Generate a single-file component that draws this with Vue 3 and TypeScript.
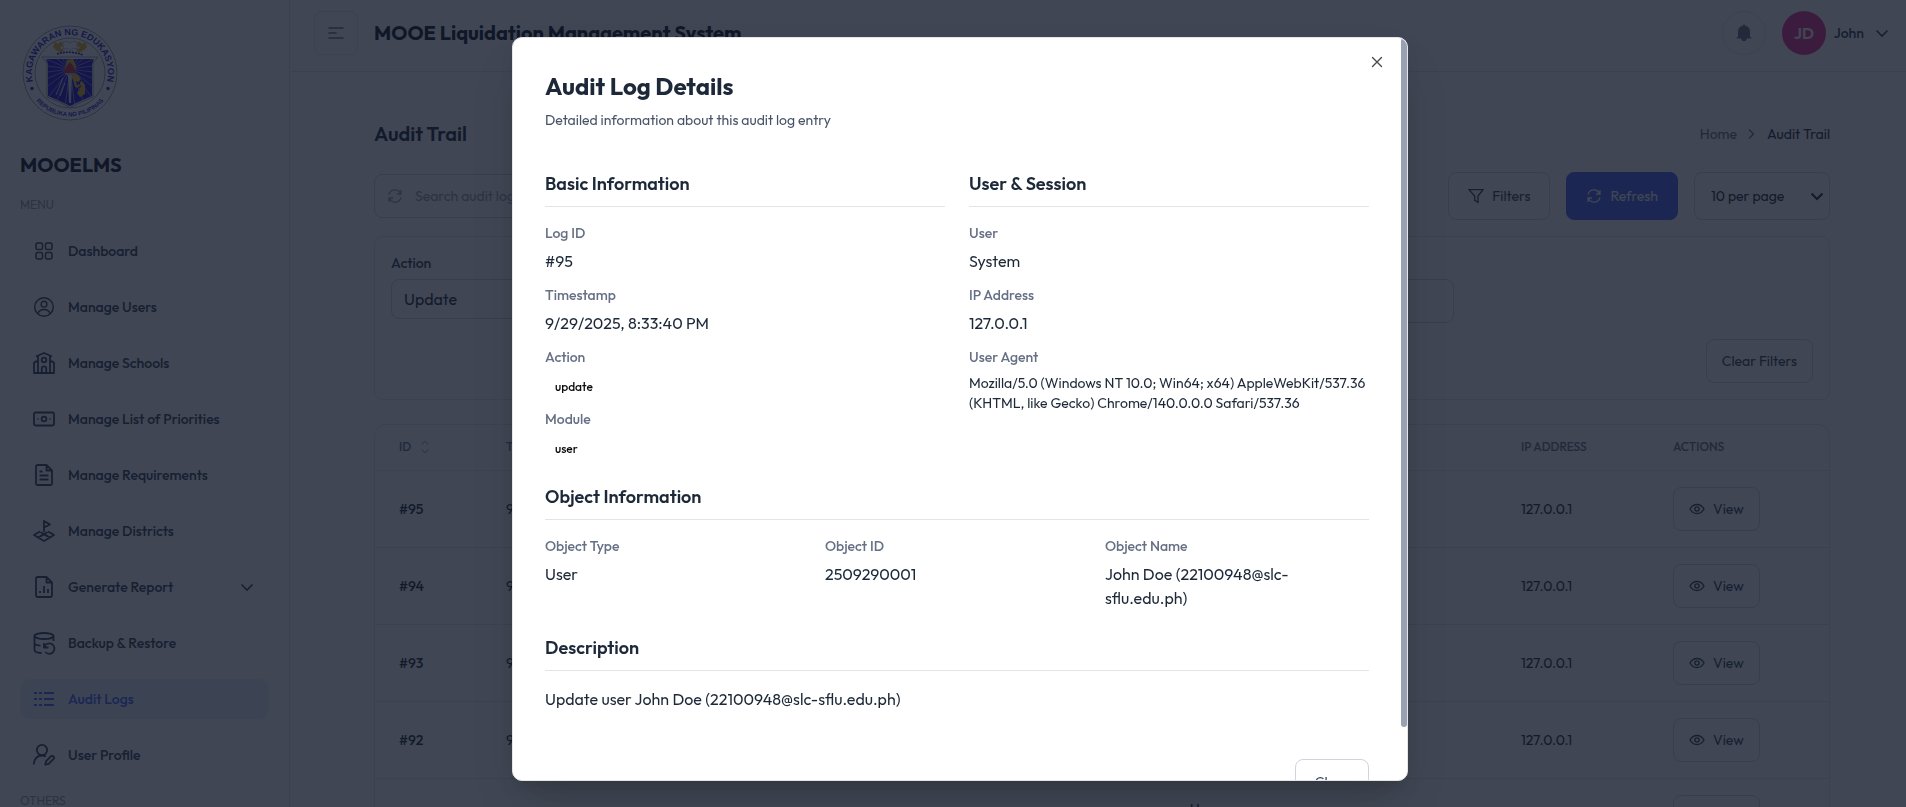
<script setup lang="ts">
import { computed, onMounted, ref } from 'vue'

interface MenuItem {
  label: string
  icon: string
  active?: boolean
  expandable?: boolean
}

interface Field {
  label: string
  value: string
  kind?: 'badge' | 'small'
}

interface LogRow {
  id: string
  time: string
  user: string
  action: string
  module: string
  object: string
  ip: string
}

const menu: MenuItem[] = [
  { label: 'Dashboard', icon: 'grid' },
  { label: 'Manage Users', icon: 'user' },
  { label: 'Manage Schools', icon: 'school' },
  { label: 'Manage List of Priorities', icon: 'cash' },
  { label: 'Manage Requirements', icon: 'file' },
  { label: 'Manage Districts', icon: 'flag' },
  { label: 'Generate Report', icon: 'report', expandable: true },
  { label: 'Backup & Restore', icon: 'backup' },
  { label: 'Audit Logs', icon: 'list', active: true },
  { label: 'User Profile', icon: 'profile' },
]

const basic: Field[] = [
  { label: 'Log ID', value: '#95' },
  { label: 'Timestamp', value: '9/29/2025, 8:33:40 PM' },
  { label: 'Action', value: 'update', kind: 'badge' },
  { label: 'Module', value: 'user', kind: 'badge' },
]

const session: Field[] = [
  { label: 'User', value: 'System' },
  { label: 'IP Address', value: '127.0.0.1' },
  {
    label: 'User Agent',
    value:
      'Mozilla/5.0 (Windows NT 10.0; Win64; x64) AppleWebKit/537.36 (KHTML, like Gecko) Chrome/140.0.0.0 Safari/537.36',
    kind: 'small',
  },
]

const objectInfo: Field[] = [
  { label: 'Object Type', value: 'User' },
  { label: 'Object ID', value: '2509290001' },
  { label: 'Object Name', value: 'John Doe (22100948@slc-sflu.edu.ph)' },
]

const rows: LogRow[] = ['#95', '#94', '#93', '#92', '#91'].map((id) => ({
  id,
  time: '9/29/2025',
  user: 'System',
  action: 'update',
  module: 'user',
  object: 'John Doe',
  ip: '127.0.0.1',
}))

const action = ref('Update')
const perPage = ref('10')
const search = ref('')
const dateRange = ref('')

// Thin scroll indicator of the dialog
const scroller = ref<HTMLElement | null>(null)
const visible = ref(1)
const offset = ref(0)
function measure() {
  const el = scroller.value
  if (!el) return
  visible.value = el.clientHeight / el.scrollHeight
  offset.value = el.scrollTop / el.scrollHeight
}
onMounted(measure)
const thumbStyle = computed(() => ({
  height: `${visible.value * 100}%`,
  marginTop: `${offset.value * (scroller.value?.clientHeight ?? 0)}px`,
}))

// Rays behind the torch on the seal
const rays = Array.from({ length: 24 }, (_, i) => {
  const a = (i / 24) * Math.PI * 2 + 0.13
  return { x: 50 + Math.cos(a) * 60, y: 46 + Math.sin(a) * 60 }
})
</script>

<template>
  <div class="app">
    <aside class="sidebar">
      <svg class="seal" viewBox="0 0 100 100" role="img" aria-label="Kagawaran ng Edukasyon">
        <defs>
          <path id="arc-top" d="M16.2 67.4A38 38 0 1 1 83.8 67.4" />
          <path id="arc-bottom" d="M6.5 56A44 44 0 0 0 93.5 56" />
          <clipPath id="shield"><path d="M26 36H74L72 41V73Q60 78 50 83Q40 78 28 73V41Z" /></clipPath>
        </defs>
        <circle cx="50" cy="50" r="47" fill="#fff" stroke="#98a0b0" />
        <circle cx="50" cy="50" r="35" fill="#fff" stroke="#98a0b0" />
        <text class="seal-top"><textPath href="#arc-top" startOffset="50%">KAGAWARAN NG EDUKASYON</textPath></text>
        <text class="seal-bottom"><textPath href="#arc-bottom" startOffset="50%">REPUBLIKA NG PILIPINAS</textPath></text>
        <circle cx="12" cy="65.500" r="1.700" fill="#2a1bd0" />
        <circle cx="88" cy="65.500" r="1.700" fill="#2a1bd0" />
        <path d="M22 34H78L73 40V74Q60 79 50 84.500Q40 79 27 74V40Z" fill="#fff" stroke="#98a0b0" />
        <g clip-path="url(#shield)">
          <rect x="20" y="30" width="60" height="56" fill="#2410d8" />
          <line v-for="(r, i) in rays" :key="i" x1="50" y1="46" :x2="r.x" :y2="r.y" stroke="#c4c9dc" stroke-width=".6" />
          <path d="M47 37L53 36L56 43L55 50L59 53L62 58L65 62V71L60 74L57 70L60 66L55 64L53 57L49 50L45 45Z" fill="#e8b82c" />
          <path d="M57 62L62 56M54 68L61 63M56 59L60 61" stroke="#2410d8" stroke-width="1.500" />
          <path d="M48 51H52L51 80H49Z" fill="#d6d9e4" />
          <path d="M44 50Q45 44 50 39Q55 44 56 50Z" fill="#d82740" />
          <path d="M45 50H55V52H45Z" fill="#a9afc0" />
          <path d="M36 72L43 55M40 73L45 60" stroke="#d8dcea" stroke-width="1" />
        </g>
        <path d="M35 19L38 21L41 18L43 22L40 25L44 27L41 30L36 27L33 24Z" fill="#e8b82c" />
        <path d="M65 19L62 21L59 18L57 22L60 25L56 27L59 30L64 27L67 24Z" fill="#e8b82c" />
        <path d="M43 19Q47 17 50 20Q53 17 57 19V26Q53 24 50 27Q47 24 43 26Z" fill="#fff" stroke="#98a0b0" stroke-width=".6" />
        <path d="M37 31Q50 27 63 32" fill="none" stroke="#2410d8" stroke-width="1.600" stroke-dasharray="2 1" />
      </svg>
      <p class="brand">MOOELMS</p>
      <h3 class="group">MENU</h3>
      <nav class="menu">
        <a v-for="m in menu" :key="m.label" href="#" class="item" :class="{ active: m.active }">
          <svg class="ico" viewBox="0 0 24 24" aria-hidden="true">
            <g v-if="m.icon === 'grid'" stroke-width="1.500">
              <rect x="4" y="4" width="6.500" height="6.500" rx="1.600" /><rect x="13.500" y="4" width="6.500" height="6.500" rx="1.600" />
              <rect x="4" y="13.500" width="6.500" height="6.500" rx="1.600" /><rect x="13.500" y="13.500" width="6.500" height="6.500" rx="1.600" />
            </g>
            <g v-else-if="m.icon === 'user'" stroke-width="1.400">
              <circle cx="12" cy="12" r="9.300" /><circle cx="12" cy="9.200" r="2.900" /><path d="M6 18.800c.8-3 2.700-4.300 6-4.300s5.200 1.300 6 4.300" />
            </g>
            <g v-else-if="m.icon === 'school'">
              <path d="M4 5.500L12 2l8 3.500M6 5v17M18 5v17M6 10.500H3.500L2 12v10h20V12l-1.500-1.500H18M9.800 22v-4.500a2.200 2.200 0 0 1 4.400 0V22" /><circle cx="12" cy="9" r="2.300" />
            </g>
            <g v-else-if="m.icon === 'cash'">
              <rect x="2" y="5.500" width="20" height="13" rx="1.500" /><circle cx="12" cy="12" r="2.400" /><path d="M5.500 12h1M17.500 12h1" />
            </g>
            <g v-else-if="m.icon === 'file'">
              <path d="M14.500 2H5.500A1.500 1.500 0 0 0 4 3.500v17A1.500 1.500 0 0 0 5.500 22h13a1.500 1.500 0 0 0 1.500-1.500V7.500zM14.500 2v5.500H20M7.500 8.500h3M7.500 12.500h9M7.500 16.500h9" />
            </g>
            <g v-else-if="m.icon === 'flag'">
              <path d="M12 13V2l6 3.500-6 3M8 12.500L2 16l4 2.500L12 15l6 3.500 4-2.500-6-3.500M6 18.500l6 3.500 6-3.500M8.500 13l7 4.500M15.500 13l-7 4.500" />
            </g>
            <g v-else-if="m.icon === 'report'">
              <path d="M14.500 2H5.500A1.500 1.500 0 0 0 4 3.500v17A1.500 1.500 0 0 0 5.500 22h13a1.500 1.500 0 0 0 1.500-1.500V7.500zM14.500 2v5.500H20M8 18v-2M12 18v-7M16 18v-4" />
            </g>
            <g v-else-if="m.icon === 'backup'">
              <ellipse cx="12" cy="5" rx="9.500" ry="3" /><path d="M2.500 5v14c0 1.500 3 2.800 7 3M21.500 5v5M2.500 12c0 1.200 2 2.200 6 2.600M12 12v4.500h4.500M12.300 16a5.200 5.200 0 1 1 1 5" />
            </g>
            <g v-else-if="m.icon === 'list'">
              <path d="M2 6h3M7 6h3M12 6h10M2 12h3M7 12h3M12 12h10M2 18h3M7 18h3M12 18h10" />
            </g>
            <g v-else>
              <circle cx="10" cy="7" r="5.200" /><path d="M1.800 21.500c0-5 3-9 8.200-9 1.600 0 2.800.3 3.800.9M21.500 13.500c-.9-.9-2.200-.7-3 .1l-4.500 4.700-.8 3.400 3.400-.8 4.800-4.700c.9-.9.9-1.900.1-2.700z" />
            </g>
          </svg>
          <span>{{ m.label }}</span>
          <svg v-if="m.expandable" class="chev" viewBox="0 0 20 20" aria-hidden="true"><path d="M4.500 7.500L10 13l5.500-5.500" /></svg>
        </a>
      </nav>
      <h3 class="group">OTHERS</h3>
    </aside>

    <div class="main">
      <header class="topbar">
        <button class="toggle" type="button" aria-label="Toggle sidebar">
          <svg viewBox="0 0 16 12" width="16" height="12"><path d="M1 1h14M1 6h7M1 11h14" fill="none" stroke="currentColor" stroke-width="1.600" stroke-linecap="round" /></svg>
        </button>
        <h1>MOOE Liquidation Management System</h1>
        <div class="account">
          <button class="bell" type="button" aria-label="Notifications">
            <svg viewBox="0 0 20 20" width="20" height="20"><path d="M10 1.500a1.300 1.300 0 0 0-1.300 1.200A6 6 0 0 0 4 8.500V14H2.800v1.600h4.500a2.700 2.700 0 0 0 5.400 0h4.500V14H16V8.500a6 6 0 0 0-4.700-5.800A1.300 1.300 0 0 0 10 1.500z" fill="currentColor" /></svg>
          </button>
          <button class="profile" type="button">
            <span class="avatar">JD</span>
            <span class="name">John</span>
            <svg class="chev" viewBox="0 0 20 20" aria-hidden="true"><path d="M4.500 7.500L10 13l5.500-5.500" /></svg>
          </button>
        </div>
      </header>

      <main class="content">
        <div class="heading">
          <h2>Audit Trail</h2>
          <nav class="crumbs" aria-label="Breadcrumb">
            <a href="#">Home</a>
            <svg viewBox="0 0 16 16" width="16" height="16"><path d="M6 3.500L10.500 8 6 12.500" fill="none" stroke="currentColor" stroke-width="1.300" /></svg>
            <span>Audit Trail</span>
          </nav>
        </div>

        <div class="tools">
          <label class="search">
            <svg class="i16" viewBox="0 0 24 24" aria-hidden="true"><path d="M21 3v6h-6M3 21v-6h6M3 10a9.200 9.200 0 0 1 17-2.500L21 9M21 14a9.200 9.200 0 0 1-17 2.500L3 15" /></svg>
            <input v-model="search" type="text" placeholder="Search audit logs..." aria-label="Search audit logs" />
          </label>
          <button class="btn" type="button">
            <svg class="i16" viewBox="0 0 24 24" aria-hidden="true"><path d="M1.500 2.500h21L15 12v9.500l-5-3V12z" /></svg>
            Filters
          </button>
          <button class="btn primary" type="button">
            <svg class="i16" viewBox="0 0 24 24" aria-hidden="true"><path d="M21 3v6h-6M3 21v-6h6M3 10a9.200 9.200 0 0 1 17-2.500L21 9M21 14a9.200 9.200 0 0 1-17 2.500L3 15" /></svg>
            Refresh
          </button>
          <div class="select per-page">
            <select v-model="perPage" aria-label="Rows per page"><option value="10">10 per page</option></select>
            <svg class="caret" viewBox="0 0 16 16" aria-hidden="true"><path d="M2.500 5.500L8 11l5.500-5.500" /></svg>
          </div>
        </div>

        <section class="panel">
          <div class="filter-grid">
            <div class="filter">
              <label for="f-action">Action</label>
              <div class="select action">
                <select id="f-action" v-model="action"><option>Update</option></select>
              </div>
            </div>
            <div></div>
            <div class="filter">
              <label for="f-date">Date</label>
              <input id="f-date" v-model="dateRange" type="text" />
            </div>
          </div>
          <button class="btn small clear" type="button">Clear Filters</button>
        </section>

        <div class="table-card">
          <table>
            <colgroup>
              <col class="c-id" /><col class="c-time" /><col class="c-mid" /><col class="c-mid" /><col class="c-mid" /><col class="c-obj" /><col class="c-ip" /><col class="c-act" />
            </colgroup>
            <thead>
              <tr>
                <th>
                  <span class="sort">ID
                    <svg viewBox="0 0 10 14" width="10" height="14"><path d="M1.500 4.500L5 1.200l3.500 3.300M1.500 9.500L5 12.800l3.500-3.300" fill="none" stroke="#b4bcca" stroke-width="1.200" /></svg>
                  </span>
                </th>
                <th>TIMESTAMP</th><th>USER</th><th>ACTION</th><th>MODULE</th><th>OBJECT</th><th>IP ADDRESS</th><th>ACTIONS</th>
              </tr>
            </thead>
            <tbody>
              <tr v-for="r in rows" :key="r.id">
                <td class="strong">{{ r.id }}</td>
                <td>{{ r.time }}</td>
                <td>{{ r.user }}</td>
                <td>{{ r.action }}</td>
                <td>{{ r.module }}</td>
                <td><div>User</div><div class="obj-sub">{{ r.object }}</div></td>
                <td>{{ r.ip }}</td>
                <td>
                  <button class="btn small" type="button">
                    <svg class="i16" viewBox="0 0 24 24" aria-hidden="true"><path d="M1.500 12C4 7.500 7.500 5.200 12 5.200s8 2.300 10.500 6.800c-2.500 4.500-6 6.800-10.500 6.800S4 16.500 1.500 12z" /><circle cx="12" cy="12" r="3.200" /></svg>
                    View
                  </button>
                </td>
              </tr>
            </tbody>
          </table>
        </div>
      </main>
    </div>

    <div class="overlay">
      <div class="dialog" role="dialog" aria-modal="true" aria-labelledby="dlg-title">
        <div ref="scroller" class="scroll" @scroll="measure">
          <header class="dlg-head">
            <h2 id="dlg-title">Audit Log Details</h2>
            <p>Detailed information about this audit log entry</p>
          </header>

          <div class="two">
            <section>
              <h3>Basic Information</h3>
              <dl class="fields">
                <div v-for="f in basic" :key="f.label">
                  <dt>{{ f.label }}</dt>
                  <dd :class="f.kind">{{ f.value }}</dd>
                </div>
              </dl>
            </section>
            <section>
              <h3>User &amp; Session</h3>
              <dl class="fields">
                <div v-for="f in session" :key="f.label">
                  <dt>{{ f.label }}</dt>
                  <dd :class="f.kind">{{ f.value }}</dd>
                </div>
              </dl>
            </section>
          </div>

          <section>
            <h3>Object Information</h3>
            <dl class="three">
              <div v-for="f in objectInfo" :key="f.label">
                <dt>{{ f.label }}</dt>
                <dd>{{ f.value }}</dd>
              </div>
            </dl>
          </section>

          <section>
            <h3>Description</h3>
            <p class="desc">Update user John Doe (22100948@slc-sflu.edu.ph)</p>
          </section>

          <footer class="dlg-foot"><button class="btn close-btn" type="button">Close</button></footer>
        </div>
        <div class="track"><div class="thumb" :style="thumbStyle"></div></div>
        <button class="x" type="button" aria-label="Close dialog">
          <svg viewBox="0 0 16 16" width="16" height="16"><path d="M3.500 3.500l9 9M12.500 3.500l-9 9" fill="none" stroke="currentColor" stroke-width="1.400" stroke-linecap="round" /></svg>
        </button>
      </div>
    </div>
  </div>
</template>

<style>
body {
  margin: 0;
  overflow: hidden;
}
</style>

<style scoped>
.app {
  display: flex;
  height: 100vh;
  overflow: hidden;
  background: #fff;
  color: #1d2939;
  font-family: Outfit, Lato, "Liberation Sans", sans-serif;
  font-size: 14px;
  line-height: 20px;
}
.app * {
  box-sizing: border-box;
}
h1, h2, h3, p, dl, dd {
  margin: 0;
}
button, input, select {
  font: inherit;
  color: inherit;
}
button {
  padding: 0;
  background: none;
  border: 0;
}
a {
  color: inherit;
  text-decoration: none;
}

.sidebar {
  flex: none;
  width: 290px;
  padding: 23px 20px 0;
  border-right: 1px solid #e4e7ec;
}
.seal {
  display: block;
  width: 100px;
  height: 100px;
}
.seal-top, .seal-bottom {
  font-family: "Liberation Sans", Arial, sans-serif;
  text-anchor: middle;
  fill: #2a1bd0;
}
.seal-top {
  font-size: 9px;
  font-weight: 700;
}
.seal-bottom {
  font-size: 6px;
  font-weight: 700;
}
.brand {
  margin-top: 28px;
  font-size: 20px;
  line-height: 28px;
  font-weight: 700;
  color: #101828;
}
.group {
  margin: 16px 0;
  font-size: 12px;
  line-height: 20px;
  font-weight: 400;
  color: #98a2b3;
}
.menu {
  display: flex;
  flex-direction: column;
  gap: 16px;
}
.item {
  display: flex;
  align-items: center;
  gap: 12px;
  height: 40px;
  padding: 0 12px;
  border-radius: 10px;
  font-weight: 500;
  color: #344054;
}
.item.active {
  background: #ecf3ff;
  color: #465fff;
}
.ico {
  width: 24px;
  height: 24px;
  fill: none;
  stroke: currentColor;
  stroke-width: 1.8;
  stroke-linejoin: round;
}
.chev {
  width: 20px;
  height: 20px;
  fill: none;
  stroke: currentColor;
  stroke-width: 1.6;
}
.item .chev {
  margin-left: auto;
}

.main {
  flex: 1;
  min-width: 0;
}
.topbar {
  display: flex;
  align-items: center;
  gap: 16px;
  padding: 11px 14px 16px 24px;
  border-bottom: 1px solid #e4e7ec;
}
.toggle {
  display: grid;
  place-items: center;
  width: 44px;
  height: 44px;
  border: 1px solid #e4e7ec;
  border-radius: 8px;
  color: #667085;
}
h1 {
  font-size: 20px;
  line-height: 28px;
  font-weight: 700;
  color: #101828;
}
.account {
  display: flex;
  align-items: center;
  gap: 16px;
  margin-left: auto;
}
.bell {
  display: grid;
  place-items: center;
  width: 44px;
  height: 44px;
  border: 1px solid #e4e7ec;
  border-radius: 50%;
  color: #667085;
}
.profile {
  display: flex;
  align-items: center;
  gap: 8px;
  font-weight: 500;
  color: #344054;
}
.avatar {
  display: grid;
  place-items: center;
  width: 44px;
  height: 44px;
  border-radius: 50%;
  background: #ec2f96;
  color: #fff;
  font-size: 16px;
  font-weight: 600;
}

.content {
  padding: 48px 76px 0 84px;
}
.heading {
  display: flex;
  align-items: center;
  justify-content: space-between;
  height: 28px;
}
.heading h2 {
  font-size: 20px;
  line-height: 28px;
  font-weight: 600;
}
.crumbs {
  display: flex;
  align-items: center;
  gap: 6px;
  color: #667085;
}
.crumbs span {
  margin-left: 2px;
  color: #1d2939;
}
.tools {
  display: flex;
  align-items: center;
  gap: 16px;
  margin-top: 24px;
}
.i16 {
  flex: none;
  width: 16px;
  height: 16px;
  fill: none;
  stroke: currentColor;
  stroke-width: 2;
}
.search {
  display: flex;
  align-items: center;
  gap: 12px;
  width: 448px;
  height: 44px;
  margin-right: auto;
  padding: 0 12px;
  border: 1px solid #d0d5dd;
  border-radius: 8px;
  color: #98a2b3;
}
.search input {
  flex: 1;
  padding: 0;
  border: 0;
  outline: 0;
  background: none;
}
.search input::placeholder {
  color: #98a2b3;
}
.btn {
  display: inline-flex;
  align-items: center;
  justify-content: center;
  gap: 8px;
  height: 48px;
  padding: 0 19px;
  border: 1px solid #d0d5dd;
  border-radius: 8px;
  color: #344054;
}
.btn.primary {
  background: #465fff;
  border-color: #465fff;
  color: #fff;
}
.btn.small {
  height: 44px;
  padding: 0 15px;
}
.select {
  display: flex;
  align-items: center;
  border: 1px solid #d0d5dd;
  border-radius: 8px;
}
.select select {
  flex: 1;
  appearance: none;
  padding: 0;
  border: 0;
  outline: 0;
  background: none;
}
.per-page {
  width: 136px;
  height: 48px;
  padding: 0 4px 0 16px;
}
.caret {
  width: 16px;
  height: 16px;
  fill: none;
  stroke: currentColor;
  stroke-width: 2;
}
.panel {
  display: flex;
  flex-direction: column;
  gap: 16px;
  margin-top: 16px;
  padding: 16px;
  border: 1px solid #e4e7ec;
  border-radius: 8px;
}
.filter-grid {
  display: grid;
  grid-template-columns: repeat(4, 1fr);
  gap: 16px;
}
.filter {
  display: flex;
  flex-direction: column;
  gap: 6px;
}
.filter label {
  font-weight: 500;
  color: #344054;
}
.filter input {
  height: 44px;
  padding: 0 12px;
  border: 1px solid #d0d5dd;
  border-radius: 8px;
  background: none;
}
.action {
  height: 40px;
  padding: 0 12px;
  font-size: 16px;
}
.clear {
  align-self: flex-end;
}
.table-card {
  margin-top: 24px;
  border: 1px solid #e4e7ec;
  border-radius: 12px;
  overflow: hidden;
}
table {
  width: 100%;
  table-layout: fixed;
  border-collapse: collapse;
}
.c-id { width: 107px; }
.c-time { width: 201px; }
.c-mid { width: 161px; }
.c-obj { width: 331px; }
.c-ip { width: 152px; }
.c-act { width: 180px; }
th {
  height: 45px;
  padding: 0 24px;
  text-align: left;
  font-size: 12px;
  font-weight: 500;
  color: #667085;
}
td {
  height: 77px;
  padding: 0 24px;
  border-top: 1px solid #e4e7ec;
}
.strong {
  font-weight: 500;
}
.sort {
  display: flex;
  align-items: center;
  gap: 9px;
}
.obj-sub {
  font-size: 12px;
  line-height: 16px;
}

.overlay {
  position: fixed;
  inset: 0;
  display: flex;
  justify-content: center;
  padding: 37px 0 26px 14px;
  background: rgba(16, 24, 40, 0.8);
}
.dialog {
  position: relative;
  display: flex;
  width: 896px;
  border: 1px solid #e5e5e5;
  border-radius: 10px;
  background: #fff;
  overflow: hidden;
  box-shadow: 0 10px 15px -3px rgba(0, 0, 0, 0.1), 0 24px 48px -12px rgba(0, 0, 0, 0.18);
}
.scroll {
  flex: 1;
  display: flex;
  flex-direction: column;
  gap: 24px;
  padding: 32px;
  overflow-y: auto;
  scrollbar-width: none;
}
.scroll > * {
  flex: none;
}
.track {
  width: 6px;
}
.thumb {
  border-radius: 3px;
  background: #98a2b3;
}
.x {
  position: absolute;
  top: 16px;
  right: 22px;
  width: 16px;
  height: 16px;
  color: #4a4a4a;
}
.x svg {
  display: block;
}
.dlg-head {
  margin-bottom: 16px;
}
.dlg-head h2 {
  font-size: 24px;
  line-height: 32px;
  font-weight: 700;
}
.dlg-head p {
  margin-top: 8px;
  color: #475467;
}
.dialog h3 {
  margin-bottom: 16px;
  padding-bottom: 8px;
  border-bottom: 1px solid #e4e4e7;
  font-size: 18px;
  line-height: 28px;
  font-weight: 600;
}
.two {
  display: grid;
  grid-template-columns: 1fr 1fr;
  gap: 24px;
}
.fields {
  display: flex;
  flex-direction: column;
  gap: 12px;
}
.three {
  display: grid;
  grid-template-columns: repeat(3, 1fr);
  gap: 16px;
}
dt {
  font-weight: 500;
  color: #667085;
}
dd {
  max-width: 240px;
  margin-top: 6px;
  font-size: 16px;
  line-height: 24px;
}
dd.badge {
  padding: 4px 10px 0;
  font-size: 12px;
  line-height: 20px;
  font-weight: 500;
  color: #0a0a0a;
}
dd.small {
  max-width: none;
  font-size: 14px;
  line-height: 20px;
}
.desc {
  font-size: 16px;
  line-height: 24px;
}
.dlg-foot {
  display: flex;
  justify-content: flex-end;
  margin-top: 24px;
}
.close-btn {
  height: 46px;
}
</style>
